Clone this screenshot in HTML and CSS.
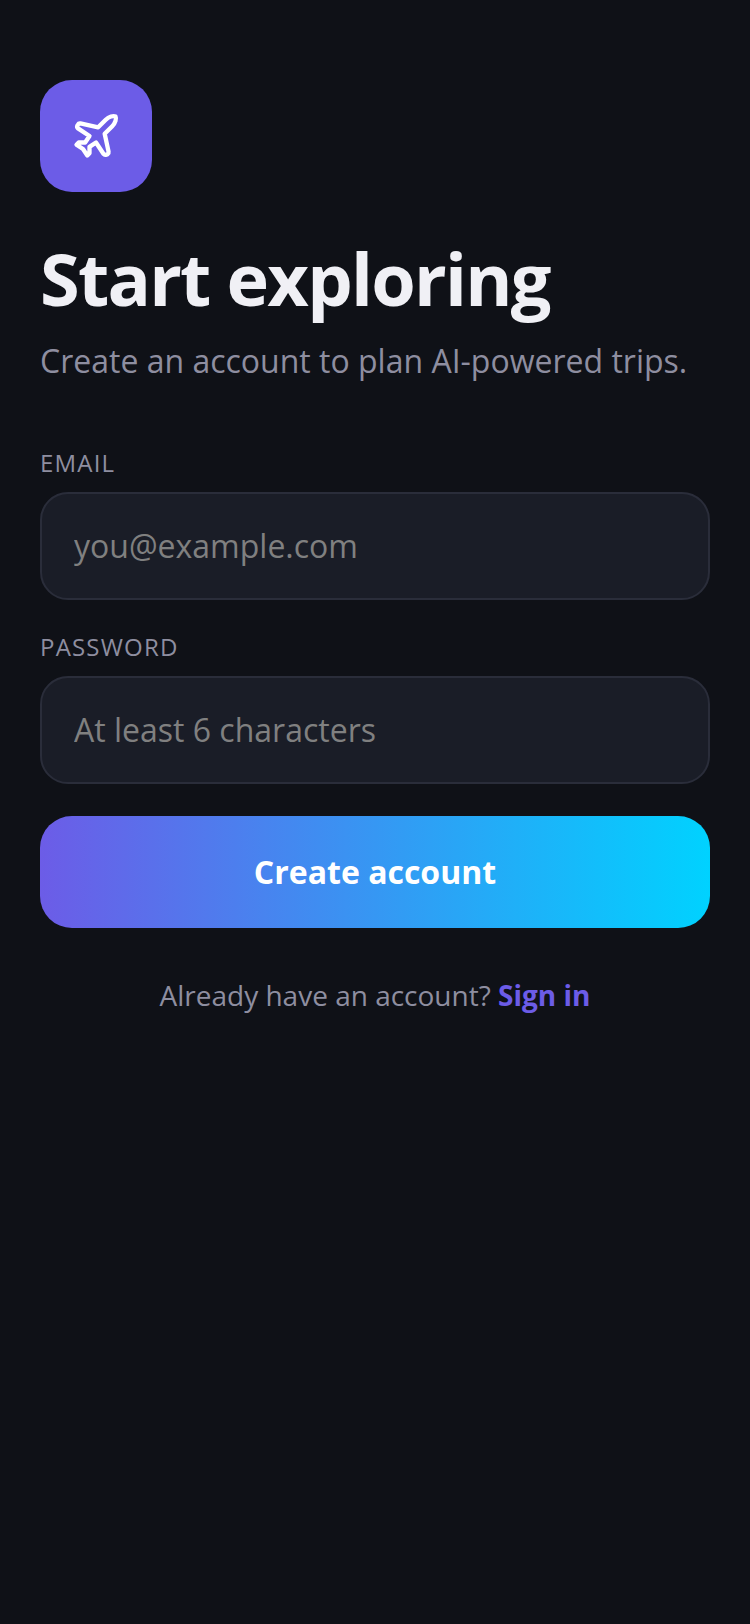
FILE: index.html
```html
<!DOCTYPE html>
<html lang="en">
<head>
  <meta charset="UTF-8">
  <meta name="viewport" content="width=device-width, initial-scale=1.0">
  <title>Start exploring</title>
  <link rel="stylesheet" href="styles.css">
</head>
<body>

  <div class="screen">
    <div class="logo">
      <svg class="logo-icon" viewBox="0 0 24 24" fill="none" stroke="#fff" stroke-width="2" stroke-linecap="round" stroke-linejoin="round">
        <path d="M17.8 19.2 16 11l3.5-3.5C21 6 21.5 4 21 3c-1-.5-3 0-4.5 1.5L13 8 4.8 6.2c-.5-.1-.9.1-1.1.5l-.3.5c-.2.5-.1 1 .3 1.3L9 12l-2 3H4l-1 1 3 2 2 3 1-1v-3l3-2 3.5 5.3c.3.4.8.5 1.3.3l.5-.2c.4-.3.6-.7.5-1.2z"/>
      </svg>
    </div>

    <h1 class="title">Start exploring</h1>
    <p class="subtitle">Create an account to plan AI-powered trips.</p>

    <form class="form">
      <label class="label" for="email">EMAIL</label>
      <input class="input" id="email" type="email" placeholder="you@example.com">

      <label class="label" for="password">PASSWORD</label>
      <input class="input" id="password" type="password" placeholder="At least 6 characters">

      <button class="submit" type="button">Create account</button>
    </form>

    <p class="switch">Already have an account? <a class="switch-link" href="#">Sign in</a></p>
  </div>

</body>
</html>
```

FILE: styles.css
```css
body {
  margin: 0;
  padding: 0;
  background: #0f1117;
  font-family: 'Open Sans', sans-serif;
}

.screen {
  height: 1624px;
  box-sizing: border-box;
  padding: 80px 40px 0;
  display: flex;
  flex-direction: column;
}

.logo {
  width: 112px;
  height: 112px;
  border-radius: 32px;
  background: #6c5ce7;
  display: flex;
  justify-content: center;
  align-items: center;
}

.logo-icon {
  width: 52px;
  height: 52px;
}

.title {
  margin: 40px 0 0;
  font-size: 72px;
  line-height: 92px;
  font-weight: 700;
  color: #f0f0f5;
  letter-spacing: -1.75px;
}

.subtitle {
  margin: 15px 0 0;
  font-size: 32px;
  line-height: 44px;
  color: #8e8ea0;
}

.form {
  display: flex;
  flex-direction: column;
  margin-top: 65px;
}

.label {
  font-size: 24px;
  line-height: 30px;
  letter-spacing: 1.2px;
  color: #8e8ea0;
  margin-bottom: 14px;
}

.input {
  height: 108px;
  box-sizing: border-box;
  margin-bottom: 32px;
  padding: 0 32px 2px;
  background: #1a1d27;
  border: 2px solid #2a2d3a;
  border-radius: 28px;
  font-family: inherit;
  font-size: 32px;
  color: #f0f0f5;
  outline: none;
}

.input::placeholder {
  color: #808080;
  opacity: 1;
}

.submit {
  height: 112px;
  border: none;
  border-radius: 32px;
  padding: 0 0 2px;
  background: linear-gradient(90deg, #6c5ce7, #00d2ff);
  font-family: inherit;
  font-size: 32px;
  font-weight: 700;
  color: #fff;
}

.switch {
  margin: 48px 0 0;
  text-align: center;
  font-size: 28px;
  line-height: 38px;
  color: #8e8ea0;
}

.switch-link {
  color: #6c5ce7;
  font-weight: 700;
  text-decoration: none;
}
```
